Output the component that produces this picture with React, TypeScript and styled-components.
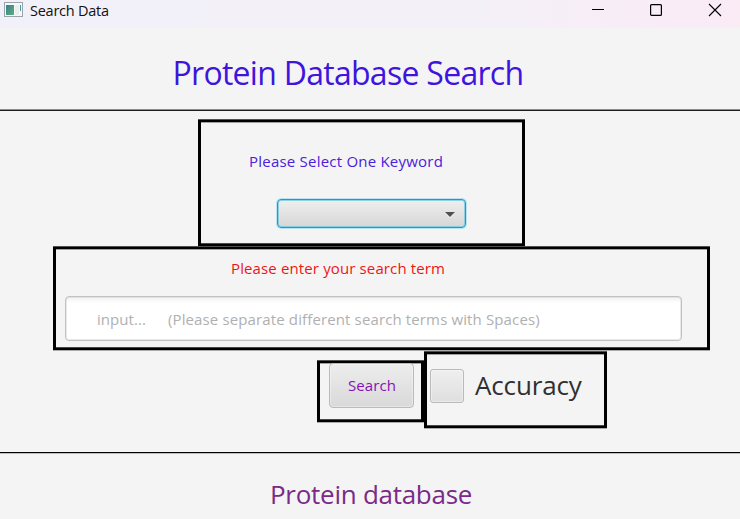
import React from "react";
import styled, { createGlobalStyle, css } from "styled-components";

const GlobalStyle = createGlobalStyle`
  * { box-sizing: border-box; }
  body { margin: 0; background: #f4f4f4; font-family: "Open Sans", "Noto Sans", sans-serif; overflow: hidden; }
`;

const Window = styled.div`
  width: 740px;
  height: 519px;
  display: flex;
  flex-direction: column;
  background: #f4f4f4;
  overflow: hidden;
`;

const TitleBar = styled.header`
  height: 28px;
  flex: none;
  display: flex;
  align-items: flex-start;
  background: linear-gradient(90deg, #f2f0f8 0%, #f4f0f8 65%, #f9ecf6 90%, #faebf5 100%);
`;

const AppIcon = styled.svg`
  margin: 2px 0 0 4px;
  flex: none;
`;

const Controls = styled.div`
  display: flex;
  gap: 40px;
  margin: 1px 16px 0 auto;
`;

interface LabelProps {
  $size: number;
  $spacing?: number;
  $color: string;
  $line: number;
}

const Label = styled.span<LabelProps>`
  display: block;
  white-space: pre;
  font-size: ${(p) => p.$size}px;
  line-height: ${(p) => p.$line}px;
  letter-spacing: ${(p) => p.$spacing ?? 0}px;
  color: ${(p) => p.$color};
`;

const WindowTitle = styled(Label)`
  margin: 1px 0 0 7px;
`;

const Heading = styled.div`
  height: 81px;
  flex: none;
  padding: 23px 0 0 172.5px;
`;

const Divider = styled.div<{ $top: string; $bottom: string }>`
  height: 2px;
  flex: none;
  border-top: 1px solid ${(p) => p.$top};
  border-bottom: 1px solid ${(p) => p.$bottom};
`;

const Content = styled.main`
  height: 341px;
  flex: none;
  display: flex;
  flex-direction: column;
  padding-top: 9px;
`;

const frame = css`
  flex: none;
  border: solid #000;
  border-width: 2px 3px;
  box-shadow: 0 -1px #505050, 0 1px #aaa, inset 0 1px #a0a0a0, inset 0 -1px #484848;
`;

const KeywordFrame = styled.section`
  ${frame}
  width: 327px;
  height: 126px;
  margin-left: 198px;
  padding: 28px 0 0 48px;
`;

const Combo = styled.button`
  display: flex;
  align-items: center;
  justify-content: flex-end;
  width: 189px;
  height: 29px;
  margin: 27px 0 0 28px;
  padding: 2px 10px 0 0;
  border: 1px solid #149fd2;
  border-radius: 4px;
  background: linear-gradient(#efefef, #d6d6d6);
  box-shadow: 0 0 0 1px rgba(100, 200, 232, 0.4), inset 0 0 0 1px rgba(110, 200, 228, 0.75);
`;

const TermFrame = styled.section`
  ${frame}
  width: 657px;
  height: 103px;
  margin: 1px 0 0 53px;
  padding: 8px 0 0 9px;
`;

const TermLabel = styled(Label)`
  margin-left: 166px;
`;

const InputBox = styled.div`
  display: flex;
  width: 617px;
  height: 45px;
  margin-top: 17px;
  padding: 11px 0 0 31px;
  border: 1px solid #c2c2c2;
  border-radius: 4px;
  background: linear-gradient(#f1f1f1, #fff 6px);
  box-shadow: inset 0 0 0 1px rgba(200, 200, 200, 0.4);
`;

const Hint = styled(Label)`
  margin-left: 22px;
`;

const Actions = styled.div`
  display: flex;
  align-items: flex-start;
  margin: 2px 0 0 317px;
`;

const SearchFrame = styled.section`
  ${frame}
  width: 107px;
  height: 61px;
  margin-top: 9px;
  padding-left: 9px;
`;

const raised = css`
  border: 1px solid #bababa;
  border-radius: 4px;
  background: linear-gradient(#ededed, #d9d9d9);
  box-shadow: inset 0 0 0 1px rgba(255, 255, 255, 0.35);
`;

const SearchButton = styled.button`
  ${raised}
  display: block;
  width: 85px;
  height: 45px;
  padding: 0 0 2px 18px;
  font: inherit;
  text-align: left;
`;

const AccuracyFrame = styled.label`
  ${frame}
  display: flex;
  width: 183px;
  height: 76px;
  padding: 15px 0 0 3px;
`;

const CheckBox = styled.span`
  ${raised}
  width: 34px;
  height: 34px;
  border-radius: 3px;
  background: linear-gradient(#efefef, #dfdfdf);
`;

const AccuracyText = styled(Label)`
  margin: -1px 0 0 11px;
`;

const Footer = styled.footer`
  padding: 20px 0 0 270px;
`;

export default function App() {
  return (
    <Window>
      <GlobalStyle />
      <TitleBar>
        <AppIcon width="19" height="16" viewBox="0 0 19 16">
          <defs>
            <linearGradient id="pane" x1="0" y1="0" x2="1" y2="1">
              <stop offset="0" stopColor="#3c7d91" />
              <stop offset="1" stopColor="#5cae7c" />
            </linearGradient>
          </defs>
          <rect x="0.5" y="0.5" width="18" height="14" fill="#f7f8f9" stroke="#9ba4aa" />
          <rect x="2" y="3" width="8" height="10" fill="url(#pane)" />
          <rect x="11" y="3" width="4" height="10" fill="#e9f0ec" />
          <rect x="16" y="3" width="1" height="6" fill="#4e94a8" />
        </AppIcon>
        <WindowTitle $size={14.5} $line={20} $spacing={-0.25} $color="#111">
          Search Data
        </WindowTitle>
        <Controls>
          <svg width="18" height="18" viewBox="0 0 18 18">
            <path d="M2 8.5h12" stroke="#000" />
          </svg>
          <svg width="18" height="18" viewBox="0 0 18 18">
            <rect x="2.6" y="3.6" width="10.8" height="10.8" rx="1" fill="none" stroke="#000" strokeWidth="1.2" />
          </svg>
          <svg width="18" height="18" viewBox="0 0 18 18">
            <path d="M3 3l12 12M15 3L3 15" stroke="#000" strokeWidth="1.1" />
          </svg>
        </Controls>
      </TitleBar>
      <Heading>
        <Label $size={32} $line={44} $spacing={-0.72} $color="#3f14dc">
          Protein Database Search
        </Label>
      </Heading>
      <Divider $top="#8c8c8c" $bottom="#1c1c1c" />
      <Content>
        <KeywordFrame>
          <Label $size={15} $line={22} $spacing={0.22} $color="#4a20dc">
            Please Select One Keyword
          </Label>
          <Combo aria-label="Keyword">
            <svg width="10" height="6" viewBox="0 0 10 6">
              <path d="M0 1h10L5 6z" fill="#f5f5f5" />
              <path d="M0 0h10L5 5z" fill="#505050" />
            </svg>
          </Combo>
        </KeywordFrame>
        <TermFrame>
          <TermLabel $size={15} $line={22} $spacing={0.13} $color="#f01414">
            Please enter your search term
          </TermLabel>
          <InputBox>
            <Label $size={15} $line={22} $spacing={0.05} $color="#b0b0b0">
              input...
            </Label>
            <Hint $size={15} $line={22} $spacing={0.13} $color="#b0b0b0">
              (Please separate different search terms with Spaces)
            </Hint>
          </InputBox>
        </TermFrame>
        <Actions>
          <SearchFrame>
            <SearchButton>
              <Label $size={15} $line={22} $spacing={0.1} $color="#8412b4">
                Search
              </Label>
            </SearchButton>
          </SearchFrame>
          <AccuracyFrame>
            <CheckBox />
            <AccuracyText $size={26} $line={34} $spacing={-0.15} $color="#303030">
              Accuracy
            </AccuracyText>
          </AccuracyFrame>
        </Actions>
      </Content>
      <Divider $top="#000" $bottom="#bcbcbc" />
      <Footer>
        <Label $size={26} $line={40} $spacing={-0.27} $color="#7a2a88">
          Protein database
        </Label>
      </Footer>
    </Window>
  );
}
